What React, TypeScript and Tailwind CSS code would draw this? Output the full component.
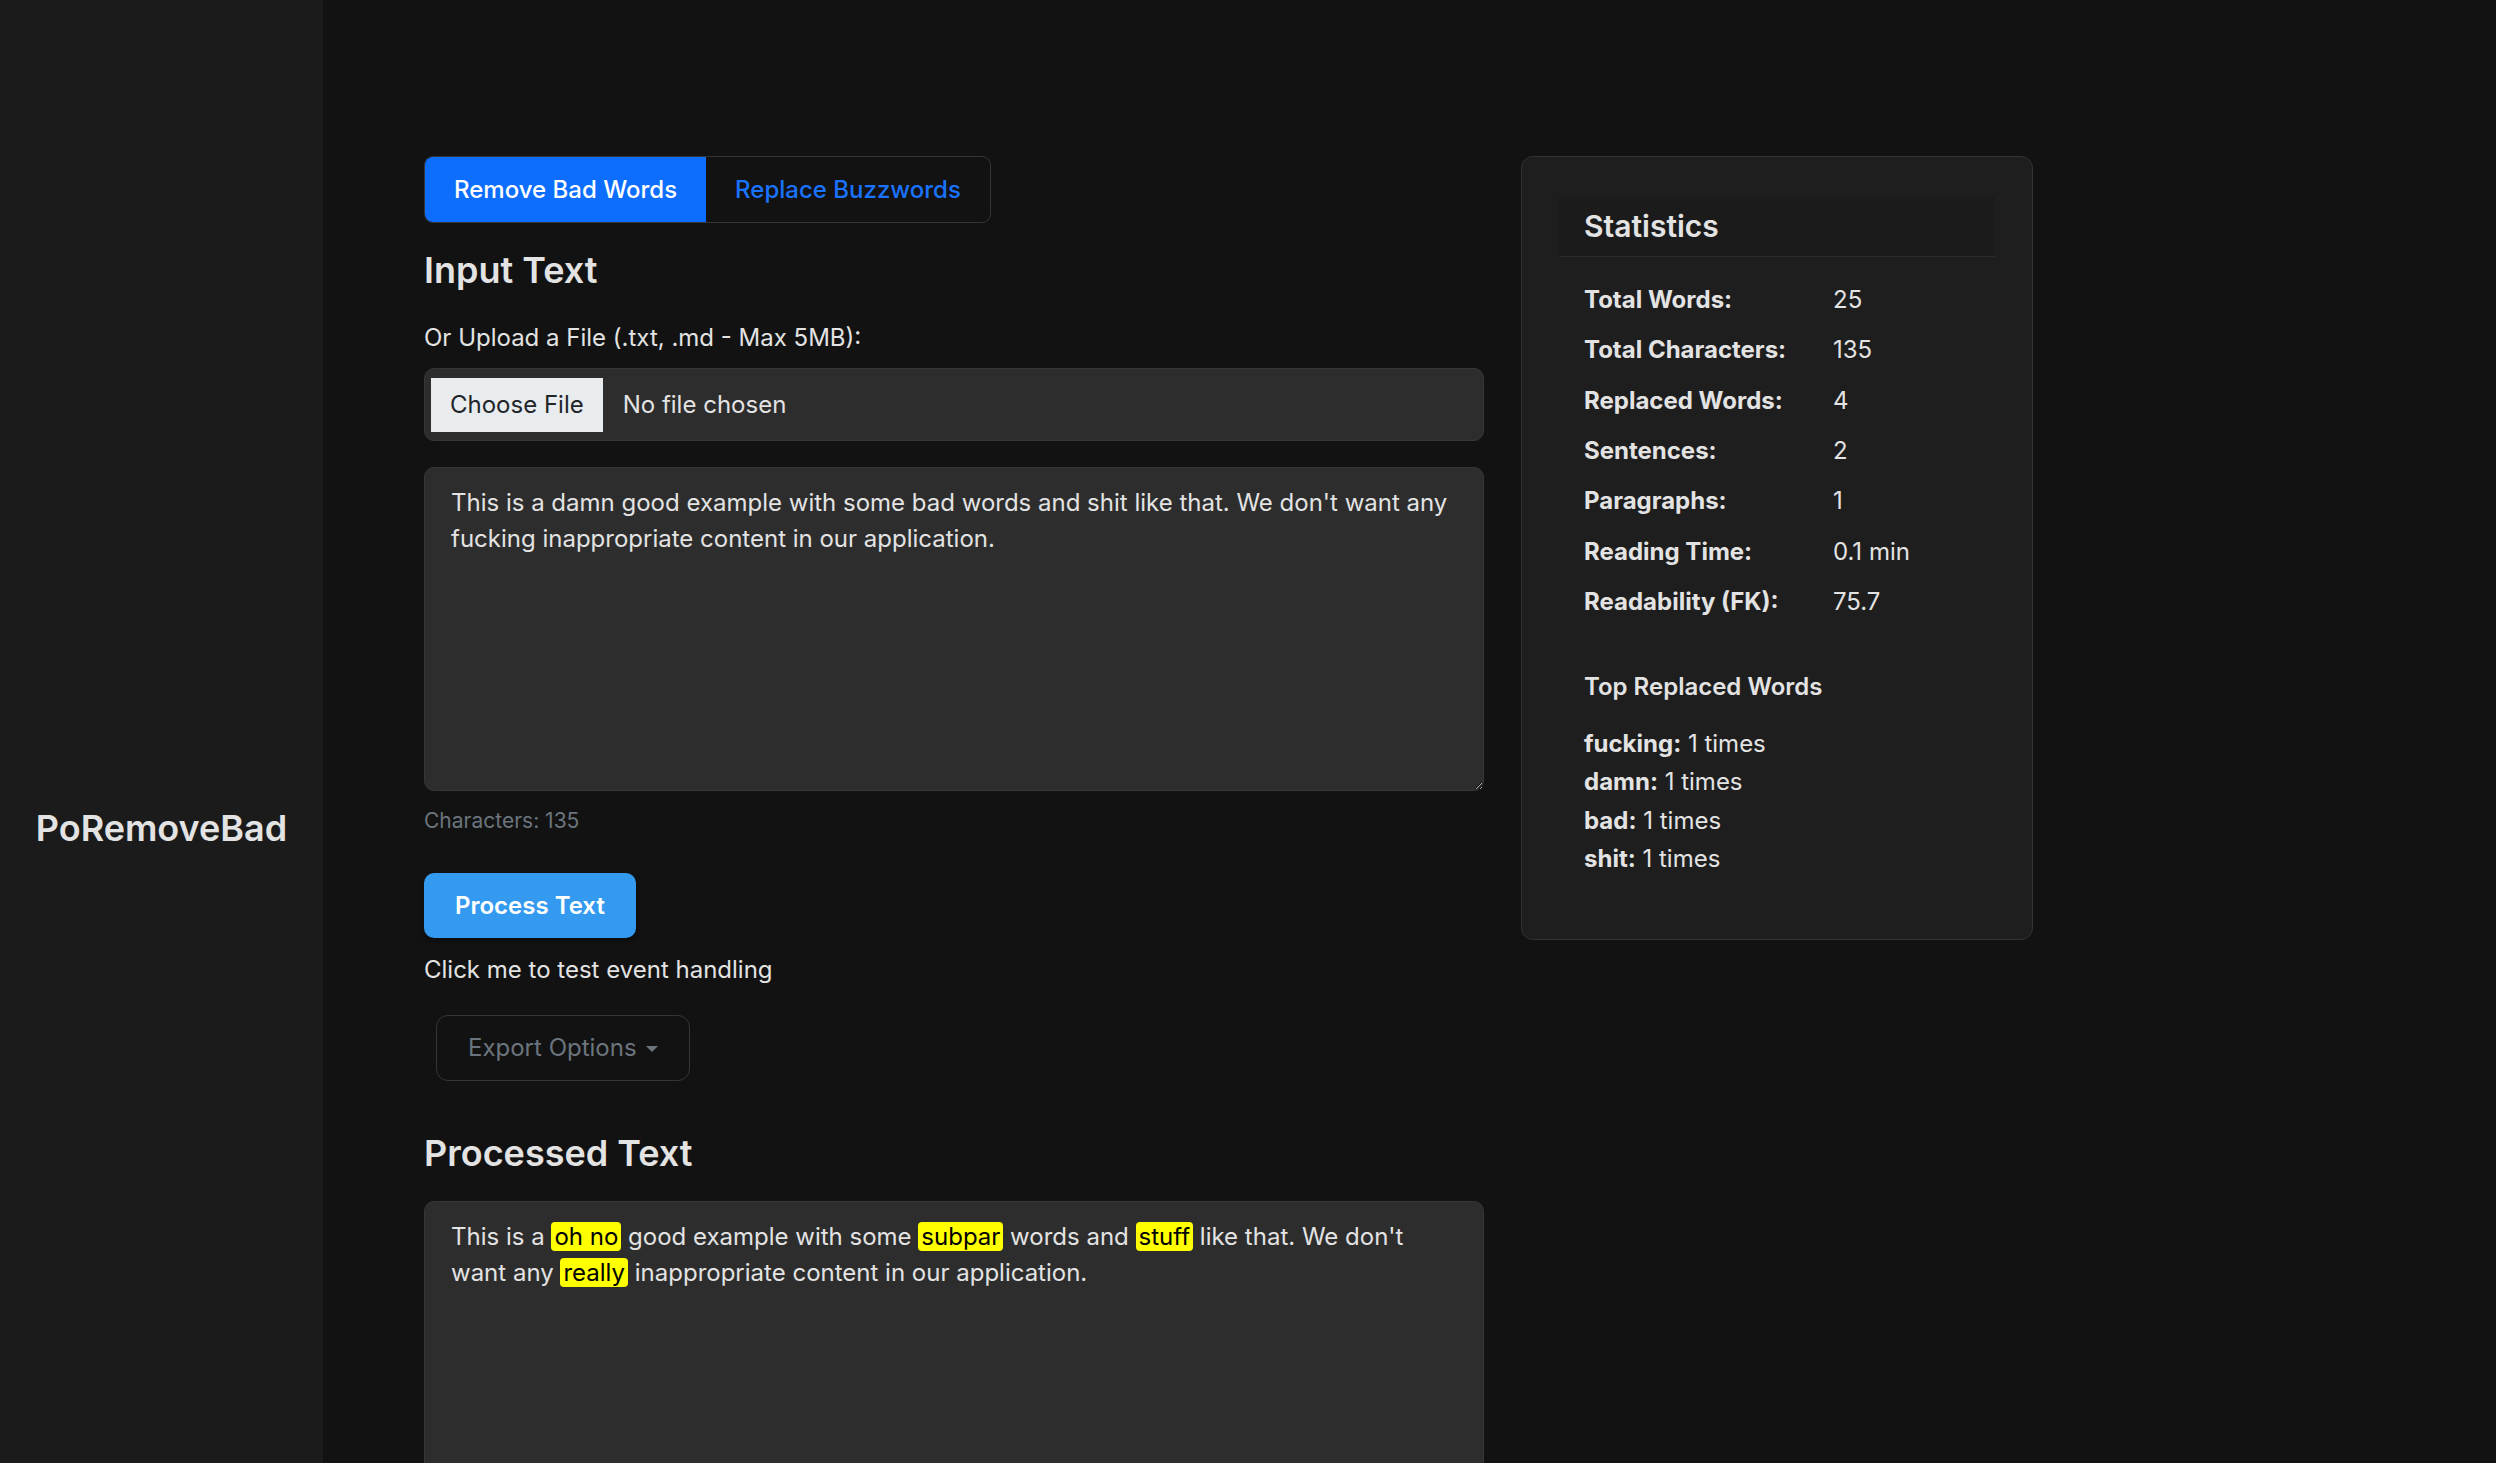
import { useState } from "react";

type Mode = "bad" | "buzz";

const inputSample =
  "This is a damn good example with some bad words and shit like that. We don't want any fucking inappropriate content in our application.";

const stats = [
  { label: "Total Words:", value: "25" },
  { label: "Total Characters:", value: "135" },
  { label: "Replaced Words:", value: "4" },
  { label: "Sentences:", value: "2" },
  { label: "Paragraphs:", value: "1" },
  { label: "Reading Time:", value: "0.1 min" },
  { label: "Readability (FK):", value: "75.7" },
];

const topWords = [
  { word: "fucking", count: 1 },
  { word: "damn", count: 1 },
  { word: "bad", count: 1 },
  { word: "shit", count: 1 },
];

function Mark({ children }: { children: string }) {
  return <mark className="rounded-[4px] bg-[#ffff00] px-[3px] text-black">{children}</mark>;
}

export default function App() {
  const [mode, setMode] = useState<Mode>("bad");
  const [text, setText] = useState(inputSample);

  return (
    <div className="h-screen overflow-y-auto bg-[#121212] font-['Inter',sans-serif] text-[#e3e3e3] [color-scheme:dark] [scrollbar-color:#3c3c3c_#121212]">
      <div className="flex min-h-full">
        <aside className="flex w-[323px] shrink-0 items-center justify-center bg-[#1b1b1b]">
          <h1 className="text-[36px] font-semibold leading-[43px] text-[#e3e3e3]">PoRemoveBad</h1>
        </aside>

        <main className="flex flex-1 items-start gap-[37px] pl-[101px] pt-[156px] pb-[131px]">
          <section className="flex w-[1060px] flex-col">
            <div className="flex h-[67px] w-fit overflow-hidden rounded-[9px] border border-[#363636]">
              <button
                onClick={() => setMode("bad")}
                className={
                  mode === "bad"
                    ? "bg-[#0d6efd] px-[29px] text-[24px] font-medium text-white"
                    : "px-[29px] text-[24px] font-medium text-[#1a73ff]"
                }
              >
                Remove Bad Words
              </button>
              <button
                onClick={() => setMode("buzz")}
                className={
                  mode === "buzz"
                    ? "bg-[#0d6efd] px-[29px] text-[24px] font-medium text-white"
                    : "px-[29px] text-[24px] font-medium text-[#1a73ff]"
                }
              >
                Replace Buzzwords
              </button>
            </div>

            <h2 className="mt-[26px] text-[36px] font-semibold leading-[42px]">Input Text</h2>
            <p className="mt-[29px] text-[24px] leading-[36px]">Or Upload a File (.txt, .md - Max 5MB):</p>

            <label className="mt-[12px] flex h-[73px] cursor-pointer items-center rounded-[10px] border border-[#363636] bg-[#2d2d2d] pl-[6px]">
              <input type="file" accept=".txt,.md" className="hidden" />
              <span className="flex h-[54px] items-center bg-[#e9ecef] px-[19px] text-[24px] text-[#212529]">Choose File</span>
              <span className="ml-[20px] text-[24px] text-[#e3e3e3]">No file chosen</span>
            </label>

            <textarea
              value={text}
              onChange={(event) => setText(event.target.value)}
              className="mt-[26px] h-[324px] rounded-[10px] border border-[#363636] bg-[#2d2d2d] px-[26px] pt-[17px] pb-[15px] text-[24px] leading-[36px] text-[#e3e3e3] outline-none"
            />
            <p className="mt-[14px] text-[21px] leading-[31px] text-[#6c757d]">Characters: {text.length}</p>

            <button className="mt-[37px] h-[65px] w-fit rounded-[10px] bg-[#339af0] px-[31px] text-[24px] font-semibold text-white shadow-[0_3px_6px_rgba(0,0,0,0.35)]">
              Process Text
            </button>
            <p className="mt-[14px] text-[24px] leading-[36px]">Click me to test event handling</p>

            <button className="ml-[12px] mt-[27px] flex h-[66px] w-fit items-center gap-[9px] rounded-[12px] border border-[#363636] px-[31px] text-[24px] text-[#6c757d]">
              Export Options
              <span className="mt-[2px] border-x-[6px] border-t-[6px] border-x-transparent border-t-[#6c757d]" />
            </button>

            <h2 className="mt-[51px] text-[36px] font-semibold leading-[42px]">Processed Text</h2>
            <div className="mt-[27px] min-h-[324px] rounded-[10px] border border-[#363636] bg-[#2d2d2d] px-[26px] pt-[17px] pb-[15px] text-[24px] leading-[36px]">
              This is a <Mark>oh no</Mark> good example with some <Mark>subpar</Mark> words and <Mark>stuff</Mark> like
              that. We don't want any <Mark>really</Mark> inappropriate content in our application.
            </div>
          </section>

          <aside className="w-[512px] rounded-[12px] border border-[#333333] bg-[#1e1e1e] px-[37px] pt-[40px] pb-[37px]">
            <div className="flex h-[60px] items-center border-b border-[#2a2a2a] bg-[#1b1b1b] px-[25px]">
              <h3 className="text-[30px] font-semibold">Statistics</h3>
            </div>
            <div className="px-[25px] pt-[18px] pb-[23px]">
              {stats.map((row) => (
                <div key={row.label} className="grid h-[50.3px] grid-cols-[249px_1fr] items-center text-[24px]">
                  <span className="font-bold">{row.label}</span>
                  <span>{row.value}</span>
                </div>
              ))}
              <h4 className="mt-[42px] text-[24px] font-semibold leading-[36px]">Top Replaced Words</h4>
              <ul className="mt-[20px] text-[24px] leading-[38.4px]">
                {topWords.map((item) => (
                  <li key={item.word}>
                    <span className="font-bold">{item.word}:</span> {item.count} times
                  </li>
                ))}
              </ul>
            </div>
          </aside>
        </main>
      </div>
    </div>
  );
}
